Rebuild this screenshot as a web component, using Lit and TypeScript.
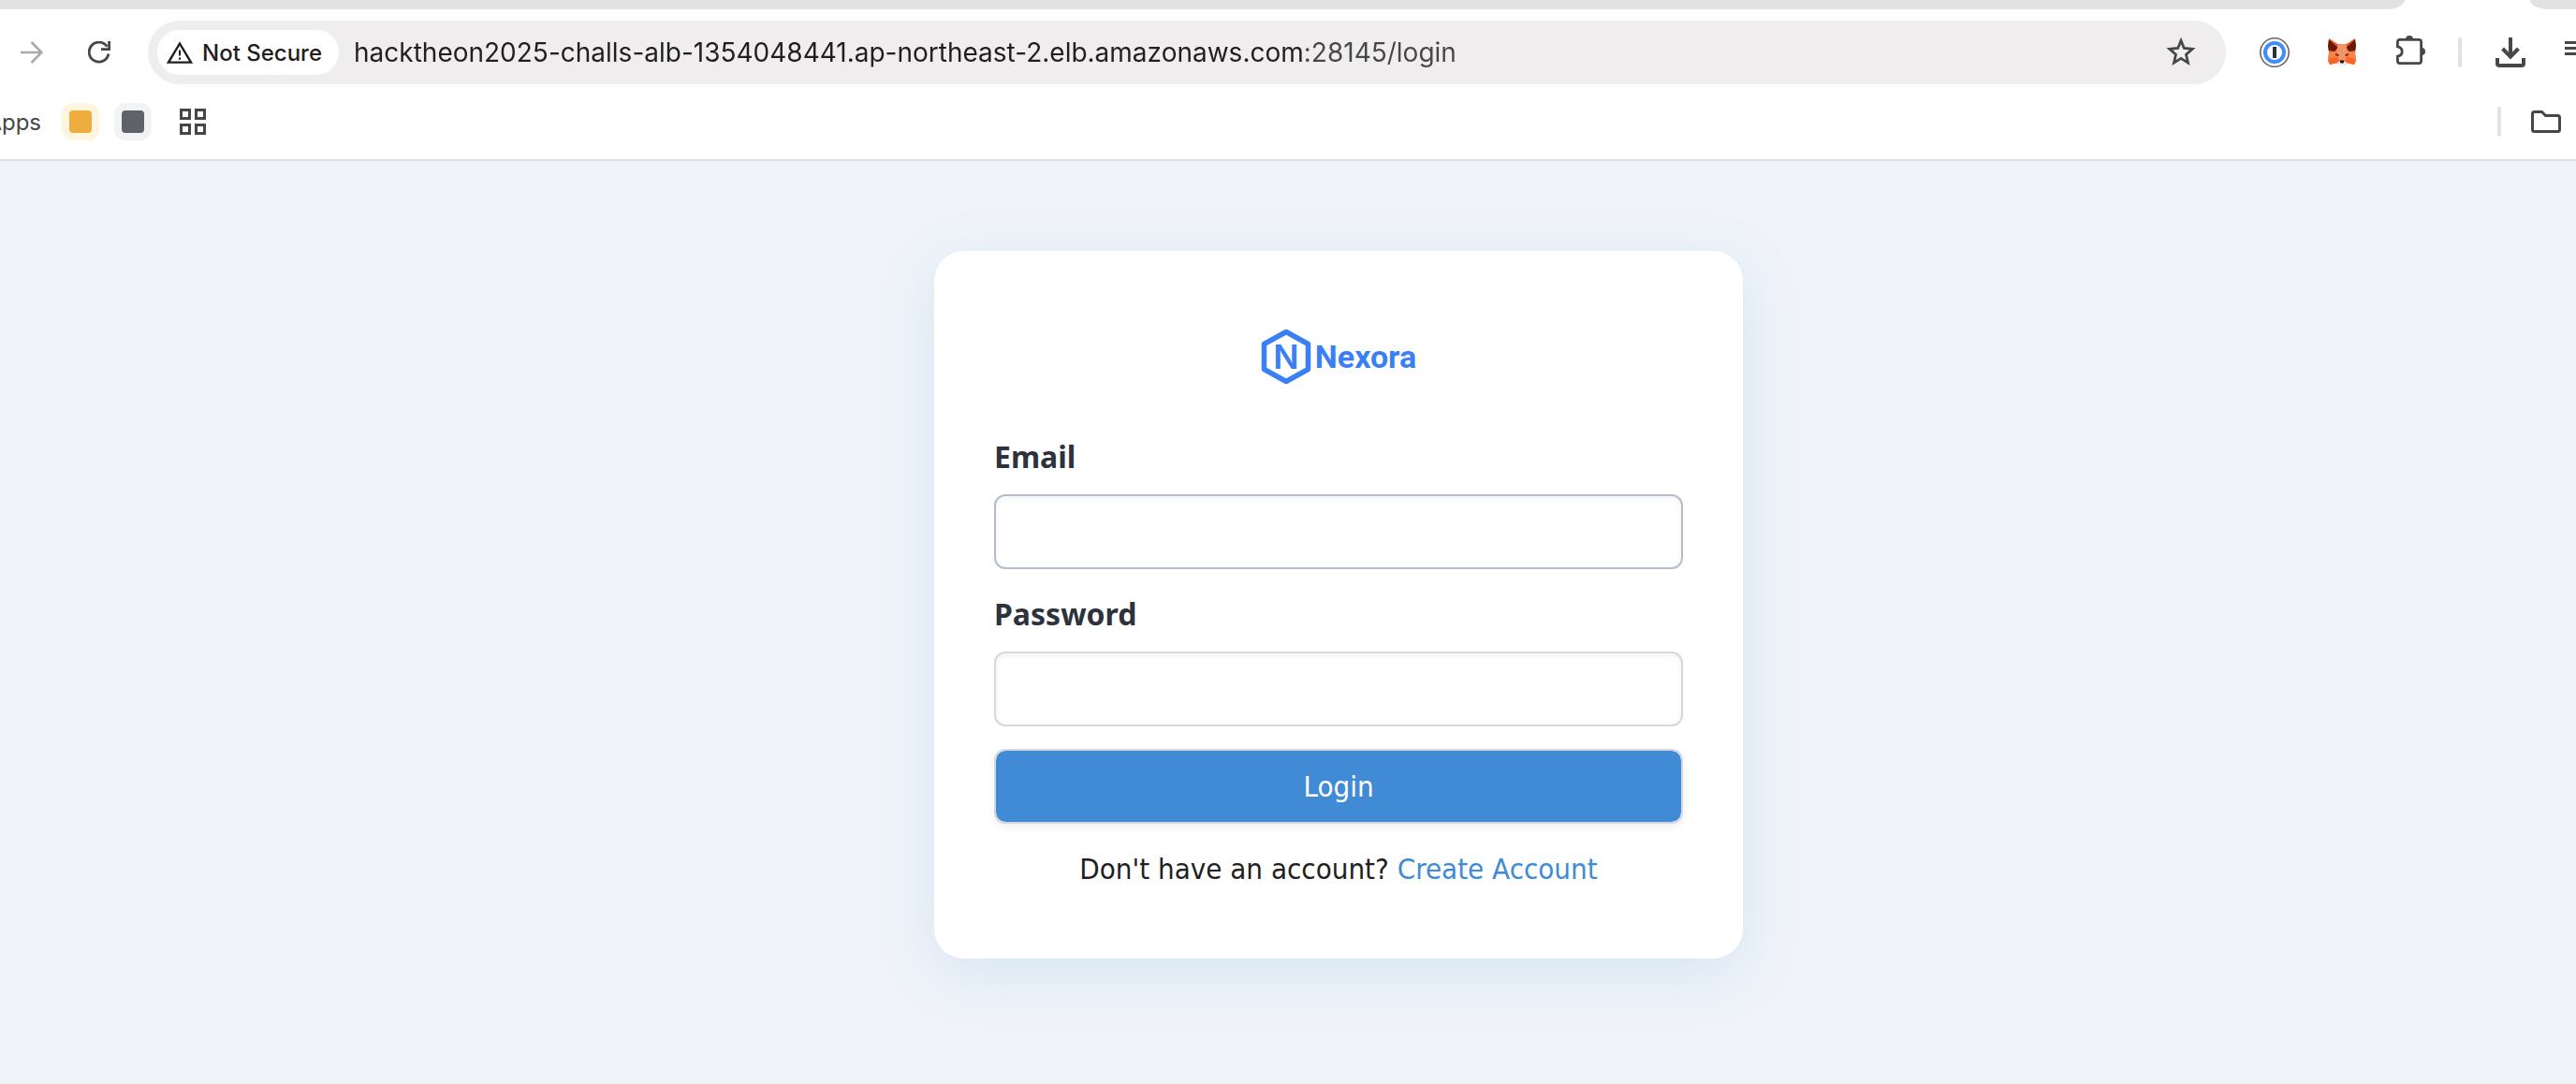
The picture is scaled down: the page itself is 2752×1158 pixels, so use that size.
import { LitElement, html, svg, css } from "lit";
import { customElement, property } from "lit/decorators.js";

const ink = "#474747";

const icons = {
  forward: svg`<svg width="24" height="24" viewBox="0 0 24 24" fill="none" stroke="#ababab" stroke-width="2.6"><path d="M0 12H22M11.5 1L22.5 12L11.5 23"/></svg>`,
  reload: svg`<svg width="24" height="24" viewBox="0 0 24 24" fill="none" stroke=${ink} stroke-width="2.8"><path d="M22 13.5A10.5 10.5 0 1 1 20.4 5.8"/><path d="M22.6 0V8.6H14"/></svg>`,
  warning: svg`<svg width="28" height="24" viewBox="0 0 28 24"><path d="M14 2.5L26 22.6H2Z" fill="none" stroke="#1f1f1f" stroke-width="2.4"/><path d="M13 9.5h2v6h-2zM13 17.5h2v2.2h-2z" fill="#1f1f1f"/></svg>`,
  star: svg`<svg width="32" height="32" viewBox="0 0 32 32" fill="none" stroke=${ink} stroke-width="2.8"><path d="M16 3.4L19.3 11.5L28.2 12.3L21.5 18.2L23.5 27.1L16 22.4L8.5 27.1L10.5 18.2L3.8 12.3L12.7 11.5Z"/></svg>`,
  vault: svg`<svg width="32" height="32" viewBox="0 0 32 32"><circle cx="16" cy="16" r="15.2" fill="#fff" stroke="#666" stroke-width="1.6"/><circle cx="16" cy="16" r="10" fill="#fff" stroke="#3f8cff" stroke-width="4"/><rect x="14" y="10" width="4" height="12" fill="#2e3036"/></svg>`,
  fox: svg`<svg width="32" height="32" viewBox="0 0 32 32">
    <path d="M2 1L11 7H21L30 1L31 11L30 17L31 25L29 29L21 27L18 30H14L11 27L3 29L1 25L2 17L1 11Z" fill="#f0733a"/>
    <path d="M2 2L12 11L8 15L2 14L1 9Z" fill="#661a02"/><path d="M30 2L20 11L24 15L30 14L31 9Z" fill="#661a02"/>
    <path d="M2 1L11 7L12 11Z" fill="#e8562a"/><path d="M30 1L21 7L20 11Z" fill="#e8562a"/>
    <path d="M12 7H20L22 15L19 25H13L10 15Z" fill="#f39467"/>
    <path d="M10 15L2 16L1 22L11 21L13 25Z" fill="#f4854e"/><path d="M22 15L30 16L31 22L21 21L19 25Z" fill="#f4854e"/>
    <path d="M1 24L11 21L12 27L3 29Z" fill="#ff6326"/><path d="M31 24L21 21L20 27L29 29Z" fill="#ff6326"/>
    <path d="M9 17L13 18.500L12 20L9 19Z" fill="#7a2405"/><path d="M23 17L19 18.500L20 20L23 19Z" fill="#7a2405"/>
    <path d="M11 27L14 25H18L21 27L18 30H14Z" fill="#f3efee"/><path d="M13.500 24.500H18.500L17.500 27.500H14.500Z" fill="#2a0b02"/>
  </svg>`,
  puzzle: svg`<svg width="34" height="36" viewBox="-1 1 34 36"><path d="M6 5.400H26Q28.600 5.400 28.600 8V28Q28.600 30.600 26 30.600H6Q3.400 30.600 3.400 28V23.200Q8.200 22.400 8.200 18Q8.200 13.600 3.400 12.800V8Q3.400 5.400 6 5.400Z" fill="none" stroke=${ink} stroke-width="2.800"/><path d="M12 5A4 4 0 0 1 20 5ZM29 14A4 4 0 0 1 29 22Z" fill=${ink}/></svg>`,
  download: svg`<svg width="32" height="32" viewBox="0 0 32 32" fill="none" stroke=${ink} stroke-width="4"><path d="M16 0V20M7.600 12L16 20.600L24.400 12M2 22V28Q2 30 4 30H28Q30 30 30 28V22"/></svg>`,
  menu: svg`<svg width="32" height="32" viewBox="0 0 32 32" fill=${ink}><path d="M2 4H30V7H2ZM2 10H30V13H2ZM2 16H30V19H2Z"/></svg>`,
  folder: svg`<svg width="32" height="24" viewBox="0 0 32 24" fill="none" stroke=${ink} stroke-width="3"><path d="M3.500 1.500H11.500L15.500 5.500H28.500Q30.500 5.500 30.500 7.500V20.500Q30.500 22.500 28.500 22.500H3.500Q1.500 22.500 1.500 20.500V3.500Q1.500 1.500 3.500 1.500Z"/></svg>`,
  grid: svg`<svg width="28" height="28" viewBox="0 0 28 28" fill="none" stroke=${ink} stroke-width="3"><path d="M1.500 1.500h9v9h-9zM17.500 1.500h9v9h-9zM1.500 17.500h9v9h-9zM17.500 17.500h9v9h-9z"/></svg>`,
};

@customElement("browser-chrome")
class BrowserChrome extends LitElement {
  @property() address = "";

  static styles = css`
    :host {
      display: block;
      background: #fff;
      border-bottom: 2px solid #dfe1e1;
      font-family: Inter, "Liberation Sans", sans-serif;
      color: #1f1f1f;
      overflow: hidden;
    }
    button {
      display: flex;
      align-items: center;
      justify-content: center;
      flex: none;
      padding: 0;
      border: 0;
      background: none;
      font: inherit;
      color: inherit;
    }
    svg { display: block; flex: none; }
    .tabs { display: flex; justify-content: space-between; height: 10px; overflow: hidden; }
    .tabs span { display: block; background: #e2e2e2; }
    .before { flex: 1; border-bottom-right-radius: 20px 10px; }
    .active { flex: none; width: 134px; }
    .tabs .active { background: #fff; }
    .after { width: 49px; border-bottom-left-radius: 20px 10px; }
    .toolbar { display: flex; align-items: center; padding: 12px 0 12px 14px; }
    .nav { display: flex; gap: 32px; padding-right: 32px; }
    .nav button { width: 40px; height: 40px; }
    .omnibox {
      display: flex;
      align-items: center;
      flex: 1;
      min-width: 0;
      height: 68px;
      box-sizing: border-box;
      padding: 10px 32px 10px 10px;
      border-radius: 34px;
      background: #efedee;
    }
    .chip {
      gap: 10px;
      height: 48px;
      padding: 0 18px 0 10px;
      border-radius: 24px;
      background: #fff;
      font-size: 24px;
      font-weight: 500;
    }
    .address {
      flex: 1;
      min-width: 0;
      margin-left: 16px;
      padding: 0;
      border: 0;
      outline: 0;
      font: 28px/40px Inter, "Liberation Sans", sans-serif;
      color: transparent;
      background: linear-gradient(90deg, #1f1f1f 1016px, #474747 1016px);
      background-clip: text;
      -webkit-background-clip: text;
    }
    .actions { display: flex; align-items: center; gap: 40px; padding-left: 36px; }
    .actions button { width: 32px; height: 32px; }
    .rule { width: 4px; height: 32px; border-radius: 2px; background: #e2e2e2; }
    .actions .rule { margin: 0 -4px; }
    .actions .menu { width: 14px; justify-content: flex-start; overflow: hidden; }
    .bookmarks { display: flex; align-items: center; padding: 8px 16px 20px 0; height: 40px; color: #474747; font-size: 24px; }
    .bookmarks .apps { width: 44px; justify-content: flex-end; overflow: hidden; }
    .groups { display: flex; align-items: center; gap: 16px; padding: 0 24px 0 22px; flex: 1; }
    .group { width: 40px; height: 40px; border-radius: 12px; }
    .group::before { content: ""; width: 24px; height: 24px; border-radius: 4px; background: currentColor; }
    .yellow { background: #fef5df; color: #edae3e; }
    .gray { background: #f1f3f4; color: #5f6368; }
    .grid { width: 56px; height: 40px; }
    .all { display: flex; align-items: center; gap: 32px; }
  `;

  render() {
    return html`
      <div class="tabs"><span class="before"></span><span class="active"></span><span class="after"></span></div>
      <div class="toolbar">
        <div class="nav">
          <button aria-label="Forward">${icons.forward}</button>
          <button aria-label="Reload">${icons.reload}</button>
        </div>
        <div class="omnibox">
          <button class="chip">${icons.warning}<span>Not Secure</span></button>
          <input class="address" aria-label="Address" spellcheck="false" .value=${this.address} />
          <button aria-label="Bookmark this page">${icons.star}</button>
        </div>
        <div class="actions">
          <button aria-label="Passwords">${icons.vault}</button>
          <button aria-label="Wallet">${icons.fox}</button>
          <button aria-label="Extensions">${icons.puzzle}</button>
          <span class="rule"></span>
          <button aria-label="Downloads">${icons.download}</button>
          <button class="menu" aria-label="Menu">${icons.menu}</button>
        </div>
      </div>
      <div class="bookmarks">
        <button class="apps">Apps</button>
        <div class="groups">
          <button class="group yellow" aria-label="Yellow group"></button>
          <button class="group gray" aria-label="Gray group"></button>
          <button class="grid" aria-label="Bookmark grid">${icons.grid}</button>
        </div>
        <div class="all">
          <span class="rule"></span>
          <button aria-label="All bookmarks">${icons.folder}</button>
        </div>
      </div>
    `;
  }
}

@customElement("login-card")
class LoginCard extends LitElement {
  static styles = css`
    :host {
      display: block;
      box-sizing: border-box;
      width: 100%;
      max-width: 864px;
      padding: 80px 64px 72px;
      border-radius: 32px;
      background: #fff;
      box-shadow: 0 16px 64px rgba(64, 138, 214, 0.15);
      font: 31px/48px "DejaVu Sans Condensed", "Noto Sans", sans-serif;
      color: #212121;
    }
    .brand { display: flex; align-items: center; justify-content: center; gap: 4px; height: 66px; margin-bottom: 50px; color: #3b7ff5; }
    .mark { display: block; }
    .mark text { font: 600 36px Inter, sans-serif; }
    .name { font: 700 34px/48px Roboto, sans-serif; }
    form { display: flex; flex-direction: column; gap: 24px; }
    .field { display: flex; flex-direction: column; gap: 16px; }
    label { font: 700 32px/48px "Noto Sans", sans-serif; color: #2d323d; }
    input, button { box-sizing: border-box; width: 100%; height: 80px; border: 2px solid #d5d8df; border-radius: 12px; font: inherit; }
    input { padding: 0 24px; background: #fff; outline: 0; box-shadow: inset 0 2px 6px rgba(0, 0, 0, 0.06); }
    .hovered { border-color: #b7bcc9; }
    button { padding: 0; background: #408ad6; background-clip: padding-box; color: #fff; box-shadow: 0 4px 8px rgba(0, 0, 0, 0.06); }
    p { margin: 0; text-align: center; }
    a { color: #408ad6; text-decoration: none; }
  `;

  render() {
    return html`
      <div class="brand">
        <svg class="mark" width="54" height="60" viewBox="0 0 54 60">
          <path d="M27 3.500L50.500 16.500V43.500L27 56.500L3.500 43.500V16.500Z" fill="none" stroke="currentColor" stroke-width="5.500" stroke-linejoin="round"/>
          <text x="27" y="43" text-anchor="middle" fill="currentColor">N</text>
        </svg>
        <span class="name">Nexora</span>
      </div>
      <form @submit=${(e: Event) => e.preventDefault()}>
        <div class="field">
          <label for="email">Email</label>
          <input class="hovered" id="email" type="email" />
        </div>
        <div class="field">
          <label for="password">Password</label>
          <input id="password" type="password" />
        </div>
        <button type="submit">Login</button>
        <p>Don't have an account? <a href="#register">Create Account</a></p>
      </form>
    `;
  }
}

@customElement("app-root")
class AppRoot extends LitElement {
  static styles = css`
    :host { display: flex; flex-direction: column; min-height: 100vh; background: #f0f4f9; }
    main { display: flex; justify-content: center; flex: 1; align-items: flex-start; padding: 96px 0 96px 108px; }
  `;

  render() {
    return html`
      <browser-chrome address="hacktheon2025-challs-alb-1354048441.ap-northeast-2.elb.amazonaws.com:28145/login"></browser-chrome>
      <main><login-card></login-card></main>
    `;
  }
}
